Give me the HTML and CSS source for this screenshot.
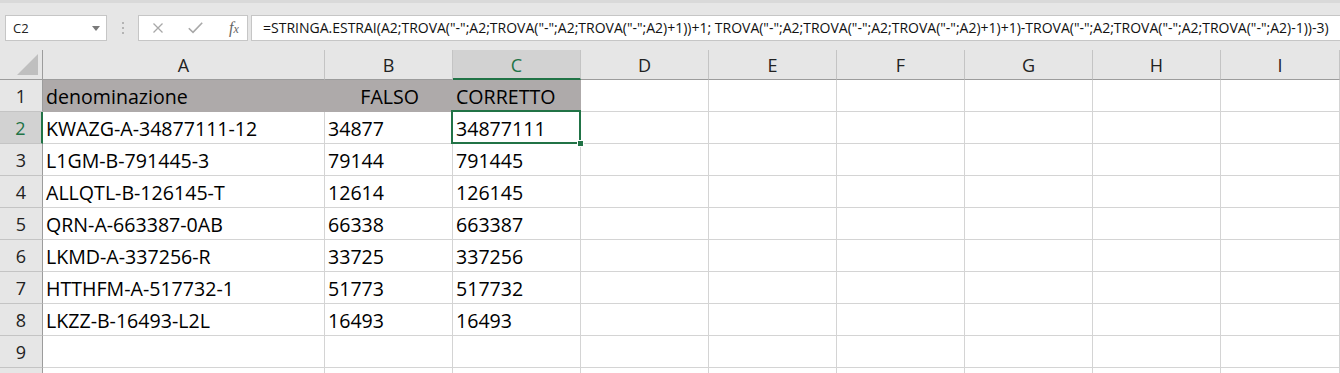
FILE: index.html
```html
<!DOCTYPE html>
<html lang="it">
<head>
    <meta charset="UTF-8">
    <title>Foglio1</title>
    <link rel="stylesheet" href="styles.css">
</head>
<body>
    <div class="formula-bar">
        <div class="name-box">
            <span>C2</span>
            <svg class="name-arrow" width="8" height="5" viewBox="0 0 8 5"><path d="M0 0H8L4 5Z" fill="#7a7a7a"/></svg>
        </div>
        <div class="grip">
            <svg width="2" height="12" viewBox="0 0 2 12"><rect y="0" width="2" height="2" fill="#b4b4b4"/><rect y="5" width="2" height="2" fill="#b4b4b4"/><rect y="10" width="2" height="2" fill="#b4b4b4"/></svg>
        </div>
        <div class="fx-buttons">
            <svg class="btn-icon" width="12" height="10" viewBox="0 0 12 10"><path d="M1.5 0.5L10.5 9.5M10.5 0.5L1.5 9.5" stroke="#a8a8a8" stroke-width="1.3" fill="none"/></svg>
            <svg class="btn-icon" width="15" height="12" viewBox="0 0 15 12"><path d="M0.8 6.2L5 10.4L14.2 0.8" stroke="#a8a8a8" stroke-width="1.6" fill="none"/></svg>
            <span class="fx">f<small>x</small></span>
        </div>
        <div class="formula-input">=STRINGA.ESTRAI(A2;TROVA("-";A2;TROVA("-";A2;TROVA("-";A2)+1))+1; TROVA("-";A2;TROVA("-";A2;TROVA("-";A2)+1)+1)-TROVA("-";A2;TROVA("-";A2;TROVA("-";A2)-1))-3)</div>
    </div>

    <div class="sheet">
        <div class="hd corner"><span class="corner-tri"></span></div>
        <div class="hd">A</div>
        <div class="hd">B</div>
        <div class="hd sel">C</div>
        <div class="hd">D</div>
        <div class="hd">E</div>
        <div class="hd">F</div>
        <div class="hd">G</div>
        <div class="hd">H</div>
        <div class="hd">I</div>

        <div class="rh">1</div>
        <div class="c title">denominazione</div>
        <div class="c title right">FALSO</div>
        <div class="c title">CORRETTO</div>
        <div class="c"></div><div class="c"></div><div class="c"></div><div class="c"></div><div class="c"></div><div class="c"></div>

        <div class="rh sel">2</div>
        <div class="c">KWAZG-A-34877111-12</div>
        <div class="c">34877</div>
        <div class="c active">34877111</div>
        <div class="c"></div><div class="c"></div><div class="c"></div><div class="c"></div><div class="c"></div><div class="c"></div>

        <div class="rh">3</div>
        <div class="c">L1GM-B-791445-3</div>
        <div class="c">79144</div>
        <div class="c">791445</div>
        <div class="c"></div><div class="c"></div><div class="c"></div><div class="c"></div><div class="c"></div><div class="c"></div>

        <div class="rh">4</div>
        <div class="c">ALLQTL-B-126145-T</div>
        <div class="c">12614</div>
        <div class="c">126145</div>
        <div class="c"></div><div class="c"></div><div class="c"></div><div class="c"></div><div class="c"></div><div class="c"></div>

        <div class="rh">5</div>
        <div class="c">QRN-A-663387-0AB</div>
        <div class="c">66338</div>
        <div class="c">663387</div>
        <div class="c"></div><div class="c"></div><div class="c"></div><div class="c"></div><div class="c"></div><div class="c"></div>

        <div class="rh">6</div>
        <div class="c">LKMD-A-337256-R</div>
        <div class="c">33725</div>
        <div class="c">337256</div>
        <div class="c"></div><div class="c"></div><div class="c"></div><div class="c"></div><div class="c"></div><div class="c"></div>

        <div class="rh">7</div>
        <div class="c">HTTHFM-A-517732-1</div>
        <div class="c">51773</div>
        <div class="c">517732</div>
        <div class="c"></div><div class="c"></div><div class="c"></div><div class="c"></div><div class="c"></div><div class="c"></div>

        <div class="rh">8</div>
        <div class="c">LKZZ-B-16493-L2L</div>
        <div class="c">16493</div>
        <div class="c">16493</div>
        <div class="c"></div><div class="c"></div><div class="c"></div><div class="c"></div><div class="c"></div><div class="c"></div>

        <div class="rh">9</div>
        <div class="c"></div><div class="c"></div><div class="c"></div>
        <div class="c"></div><div class="c"></div><div class="c"></div><div class="c"></div><div class="c"></div><div class="c"></div>

        <!-- riga 10 appena visibile in fondo -->
        <div class="rh"></div>
        <div class="c"></div><div class="c"></div><div class="c"></div>
        <div class="c"></div><div class="c"></div><div class="c"></div><div class="c"></div><div class="c"></div><div class="c"></div>
    </div>
</body>
</html>
```

FILE: styles.css
```css
body {
    margin: 0;
    height: 373px;
    overflow: hidden;
    background-color: #fff;
    font-family: "Open Sans", "Noto Sans", sans-serif;
}
.formula-bar {
    display: flex;
    align-items: center;
    height: 50px;
    box-sizing: border-box;
    padding-top: 3px;
    border-top: 3px solid #d9d9d9;
    background-color: #e6e6e6;
}
.name-box {
    display: flex;
    align-items: center;
    justify-content: space-between;
    box-sizing: border-box;
    width: 102px;
    height: 26px;
    margin-left: 5px;
    padding: 0 6px 0 7px;
    background-color: #fff;
    border: 1px solid #c6c6c6;
    font-size: 13px;
    color: #222;
}
.grip {
    display: flex;
    width: 31px;
    justify-content: center;
}
.fx-buttons {
    display: flex;
    align-items: center;
    box-sizing: border-box;
    width: 110px;
    height: 26px;
    padding-left: 13px;
    background-color: #fff;
    border: 1px solid #c6c6c6;
}
.btn-icon {
    margin-right: 24px;
}
.btn-icon + .btn-icon {
    margin-right: 26px;
}
.fx {
    font-family: "Liberation Serif", serif;
    font-style: italic;
    font-size: 16px;
    color: #666;
}
.fx small {
    font-size: 12px;
}
.formula-input {
    flex: 1;
    box-sizing: border-box;
    height: 26px;
    margin-left: 3px;
    margin-right: -2px;
    padding-left: 11px;
    line-height: 24px;
    white-space: nowrap;
    overflow: hidden;
    background-color: #fff;
    border: 1px solid #c6c6c6;
    font-size: 14px;
    color: #111;
}
.sheet {
    display: grid;
    grid-template-columns: 43px 282px repeat(7, 128px) 1fr;
    grid-template-rows: 30px;
    grid-auto-rows: 32px;
}
.hd, .rh, .c {
    box-sizing: border-box;
    display: flex;
    align-items: center;
    font-size: 18px;
    color: #000;
}
.hd {
    justify-content: center;
    background-color: #e6e6e6;
    border-right: 1px solid #c4c4c4;
    border-bottom: 1px solid #9c9c9c;
    color: #222;
    padding-top: 1px;
}
.hd.sel {
    background-color: #d2d2d2;
    border-bottom: 2px solid #217346;
    color: #217346;
}
.corner {
    position: relative;
    border-right: 1px solid #9c9c9c;
}
.corner-tri {
    position: absolute;
    right: 4px;
    bottom: 4px;
    width: 0;
    height: 0;
    border-left: 21px solid transparent;
    border-bottom: 21px solid #bfbfbf;
}
.rh {
    justify-content: center;
    background-color: #e6e6e6;
    border-right: 1px solid #9c9c9c;
    border-bottom: 1px solid #c4c4c4;
    color: #222;
}
.rh.sel {
    background-color: #d2d2d2;
    border-right: 2px solid #217346;
    color: #217346;
}
.c {
    font-size: 19.6px;
    padding-left: 3px;
    padding-top: 1px;
    white-space: nowrap;
    border-right: 1px solid #d4d4d4;
    border-bottom: 1px solid #d4d4d4;
}
.c.title {
    background-color: #aeaaaa;
    border-color: #aeaaaa;
}
.c.right {
    justify-content: flex-end;
    padding-right: 33px;
}
.c.active {
    position: relative;
}
.c.active::before {
    content: "";
    position: absolute;
    left: -2px;
    top: -2px;
    right: -1px;
    bottom: -1px;
    border: 2px solid #217346;
}
.c.active::after {
    content: "";
    position: absolute;
    right: -4px;
    bottom: -4px;
    width: 5px;
    height: 5px;
    background-color: #217346;
    border: 1px solid #fff;
}
```
